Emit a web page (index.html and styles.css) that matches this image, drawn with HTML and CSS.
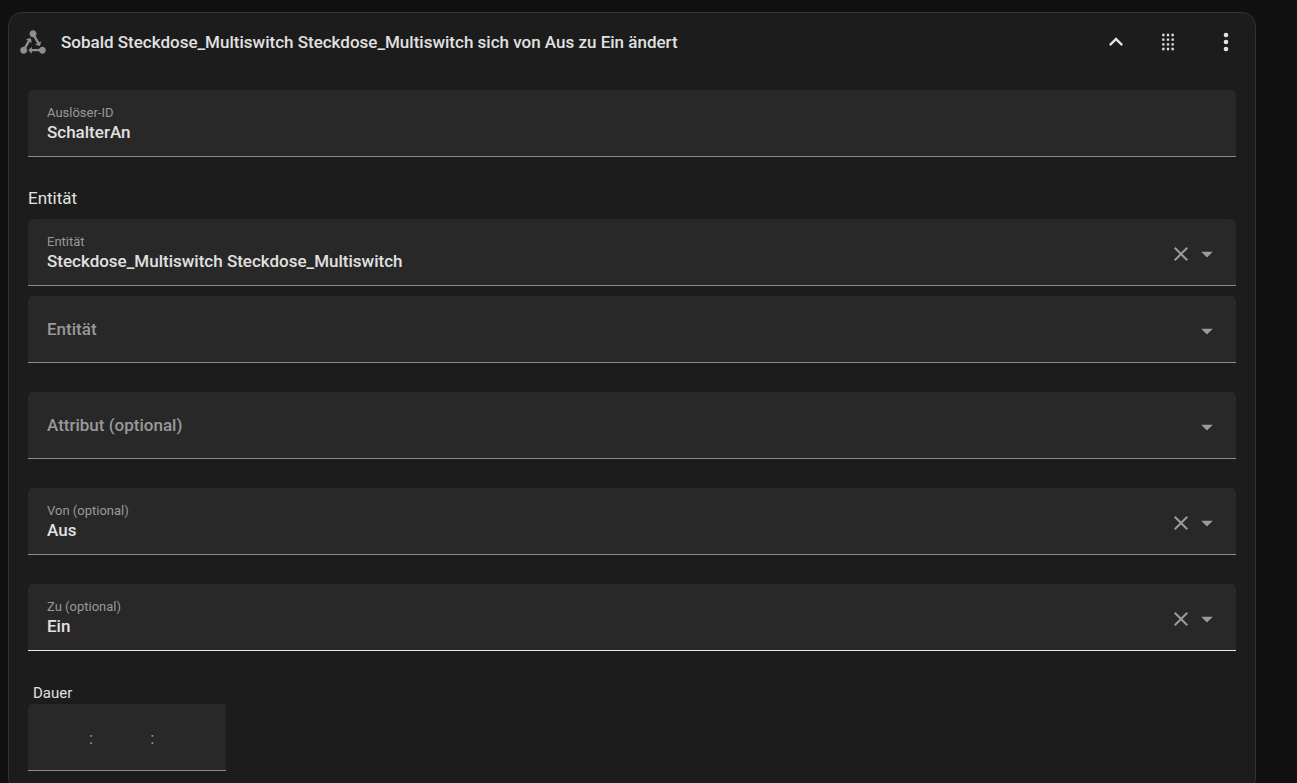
FILE: index.html
```
<!DOCTYPE html>
<html lang="de">
<head>
    <meta charset="UTF-8">
    <meta name="viewport" content="width=device-width, initial-scale=1.0">
    <title>Auslöser bearbeiten</title>
    <link rel="stylesheet" href="styles.css">
</head>
<body>
    <form class="card">
        <header class="card-header">
            <svg class="trigger-icon" viewBox="0 0 24 24" aria-hidden="true"><path d="M6.27 17.05C6.72 17.58 7 18.25 7 19C7 20.66 5.66 22 4 22S1 20.66 1 19 2.34 16 4 16C4.18 16 4.36 16 4.53 16.05L7.6 10.69L5.86 9.7L9.95 8.58L11.07 12.67L9.33 11.68L6.27 17.05M20 16C18.7 16 17.6 16.84 17.18 18H11V16L8 19L11 22V20H17.18C17.6 21.16 18.7 22 20 22C21.66 22 23 20.66 23 19S21.66 16 20 16M12 8C12.18 8 12.36 8 12.53 7.95L15.6 13.31L13.86 14.3L17.95 15.42L19.07 11.33L17.33 12.32L14.27 6.95C14.72 6.42 15 5.75 15 5C15 3.34 13.66 2 12 2S9 3.34 9 5 10.34 8 12 8Z"/></svg>
            <h1>Sobald Steckdose_Multiswitch Steckdose_Multiswitch sich von Aus zu Ein ändert</h1>
            <button type="button" class="icon-button" aria-label="Einklappen">
                <svg viewBox="0 0 24 24"><path d="M7.41 15.41L12 10.83L16.59 15.41L18 14L12 8L6 14Z"/></svg>
            </button>
            <button type="button" class="icon-button drag" aria-label="Verschieben">
                <svg viewBox="0 0 24 24"><path d="M7 5h2v2H7zM11 5h2v2h-2zM15 5h2v2h-2zM7 9h2v2H7zM11 9h2v2h-2zM15 9h2v2h-2zM7 13h2v2H7zM11 13h2v2h-2zM15 13h2v2h-2zM7 17h2v2H7zM11 17h2v2h-2zM15 17h2v2h-2z"/></svg>
            </button>
            <button type="button" class="icon-button menu" aria-label="Menü">
                <svg viewBox="0 0 24 24"><circle cx="12" cy="6" r="2"/><circle cx="12" cy="12" r="2"/><circle cx="12" cy="18" r="2"/></svg>
            </button>
        </header>

        <div class="card-content">
            <div class="field">
                <label for="triggerId">Auslöser-ID</label>
                <input type="text" id="triggerId" value="SchalterAn">
            </div>

            <h2>Entität</h2>
            <div class="entities">
                <div class="field">
                    <label for="entity1">Entität</label>
                    <select id="entity1">
                        <option>Steckdose_Multiswitch Steckdose_Multiswitch</option>
                    </select>
                    <div class="field-icons">
                        <button type="button" aria-label="Löschen"><svg class="clear" viewBox="0 0 24 24"><path d="M19 6.41L17.59 5L12 10.59L6.41 5L5 6.41L10.59 12L5 17.59L6.41 19L12 13.41L17.59 19L19 17.59L13.41 12Z"/></svg></button>
                        <svg class="arrow" viewBox="0 0 24 24"><path d="M7 10L12 15L17 10Z"/></svg>
                    </div>
                </div>
                <div class="field empty">
                    <label for="entity2">Entität</label>
                    <select id="entity2">
                        <option></option>
                    </select>
                    <div class="field-icons">
                        <svg class="arrow" viewBox="0 0 24 24"><path d="M7 10L12 15L17 10Z"/></svg>
                    </div>
                </div>
            </div>

            <div class="field empty">
                <label for="attribute">Attribut (optional)</label>
                <select id="attribute">
                    <option></option>
                </select>
                <div class="field-icons">
                    <svg class="arrow" viewBox="0 0 24 24"><path d="M7 10L12 15L17 10Z"/></svg>
                </div>
            </div>

            <div class="field">
                <label for="from">Von (optional)</label>
                <select id="from">
                    <option>Aus</option>
                    <option>Ein</option>
                </select>
                <div class="field-icons">
                    <button type="button" aria-label="Löschen"><svg class="clear" viewBox="0 0 24 24"><path d="M19 6.41L17.59 5L12 10.59L6.41 5L5 6.41L10.59 12L5 17.59L6.41 19L12 13.41L17.59 19L19 17.59L13.41 12Z"/></svg></button>
                    <svg class="arrow" viewBox="0 0 24 24"><path d="M7 10L12 15L17 10Z"/></svg>
                </div>
            </div>

            <div class="field active">
                <label for="to">Zu (optional)</label>
                <select id="to">
                    <option>Ein</option>
                    <option>Aus</option>
                </select>
                <div class="field-icons">
                    <button type="button" aria-label="Löschen"><svg class="clear" viewBox="0 0 24 24"><path d="M19 6.41L17.59 5L12 10.59L6.41 5L5 6.41L10.59 12L5 17.59L6.41 19L12 13.41L17.59 19L19 17.59L13.41 12Z"/></svg></button>
                    <svg class="arrow" viewBox="0 0 24 24"><path d="M7 10L12 15L17 10Z"/></svg>
                </div>
            </div>

            <div class="duration" role="group" aria-labelledby="durationLabel">
                <label id="durationLabel" for="hours">Dauer</label>
                <div class="duration-inputs">
                    <input type="text" id="hours" inputmode="numeric">
                    <span>:</span>
                    <input type="text" inputmode="numeric" aria-label="Minuten">
                    <span>:</span>
                    <input type="text" inputmode="numeric" aria-label="Sekunden">
                </div>
            </div>
        </div>
    </form>
</body>
</html>
```
FILE: styles.css
```
* {
    box-sizing: border-box;
}
body {
    margin: 12px 41px 12px 8px;
    background-color: #111;
    color: #e1e1e1;
    font-family: Roboto, sans-serif;
    font-size: 17px;
}
.card {
    background: #1c1c1c;
    border: 1px solid #333;
    border-radius: 14px;
}
.card-header {
    display: flex;
    align-items: center;
    height: 57px;
    padding-left: 10px;
}
.card-header h1 {
    flex: 1;
    margin: 0 0 0 14px;
    font-size: 17px;
    font-weight: 500;
    line-height: 20px;
}
svg {
    display: block;
    width: 28px;
    height: 28px;
    fill: currentColor;
}
.trigger-icon {
    color: #8e8e8e;
}
button {
    padding: 0;
    border: none;
    background: none;
    color: inherit;
    cursor: pointer;
}
.icon-button {
    display: flex;
    align-items: center;
    justify-content: center;
    width: 58px;
    height: 57px;
}
.drag {
    width: 46px;
    cursor: grab;
}
.menu {
    margin-left: 6px;
}
.card-content {
    display: flex;
    flex-direction: column;
    gap: 29px;
    padding: 20px 19px;
}
.card-content h2 {
    margin: 0 0 -20px;
    font-size: 17px;
    font-weight: 400;
    line-height: 24px;
}
.entities {
    display: grid;
    gap: 10px;
}
/* label, control and icons share one cell */
.field {
    display: grid;
    height: 67px;
    background: #282828;
    border-bottom: 1px solid #8a8a8a;
    border-radius: 5px 5px 0 0;
    font-weight: 500;
}
.field > * {
    grid-area: 1 / 1;
}
.field label {
    align-self: start;
    justify-self: start;
    margin: 15px 0 0 19px;
    color: #999;
    font-size: 13px;
    font-weight: 400;
    line-height: 16px;
}
.field input,
.field select {
    width: 100%;
    padding: 18px 90px 0 19px;
    border: none;
    outline: none;
    background: none;
    color: inherit;
    font: inherit;
    appearance: none;
}
.field option {
    background: #282828;
}
.field.empty label {
    align-self: center;
    margin-top: 0;
    font-size: 17px;
    font-weight: 500;
}
.field.active {
    border-bottom-color: #e8e8e8;
}
.field-icons {
    display: flex;
    align-items: center;
    justify-self: end;
    padding: 4px 15px 0 0;
    color: #9b9b9b;
    pointer-events: none;
}
.field-icons button {
    pointer-events: auto;
}
.field-icons .clear {
    width: 24px;
    height: 24px;
}
.duration label {
    display: block;
    margin: 2px 0 0 5px;
    font-size: 15px;
    line-height: 22px;
}
.duration-inputs {
    display: flex;
    align-items: center;
    width: 198px;
    height: 67px;
    padding: 2px 14px 0 4px;
    background: #282828;
    border-bottom: 1px solid #8a8a8a;
    border-radius: 5px 0 0 0;
    color: #999;
}
.duration-inputs input {
    width: 57px;
    padding: 0;
    border: none;
    outline: none;
    background: none;
    color: #e1e1e1;
    font: inherit;
    text-align: center;
}
```
